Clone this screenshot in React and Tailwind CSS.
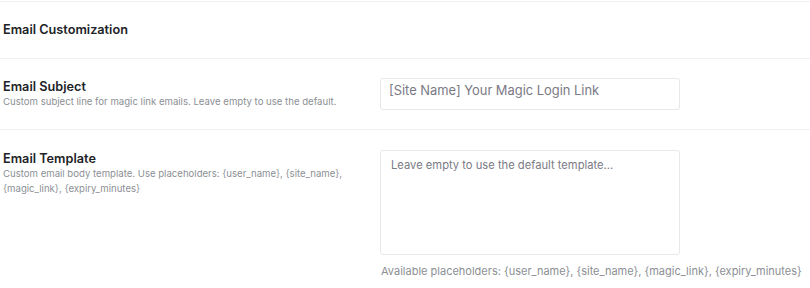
export default function App() {
  return (
    <div className="w-[810px] h-[288px] bg-white overflow-hidden" style={{ fontFamily: "Inter, 'Noto Sans', sans-serif" }}>
      <div className="mt-[1px] border-t border-[#f0f0f0]" />
      <div className="h-[57px] flex items-center pl-[3px] border-b border-[#f0f0f0]">
        <h2 className="text-[12.7px] leading-[16px] font-semibold text-[#1d2327]">Email Customization</h2>
      </div>
      <div className="flex py-[19px] border-b border-[#f0f0f0]">
        <div className="w-[380px] pl-[3px] pt-[1px]">
          <div className="text-[12.7px] leading-[16px] font-semibold text-[#1d2327]">Email Subject</div>
          <div className="text-[9.6px] leading-[15px] text-[#8c8f94] mt-[-1px]">Custom subject line for magic link emails. Leave empty to use the default.</div>
        </div>
        <div className="w-[300px] h-[32px] border border-[#e8e8e8] rounded-[3px] pl-[8px] pt-[3px] text-[12.9px] leading-[18px] text-[#7a7a85]">
          [Site Name] Your Magic Login Link
        </div>
      </div>
      <div className="flex pt-[20px]">
        <div className="w-[380px] pl-[3px] pt-[1px]">
          <div className="text-[12.7px] leading-[16px] font-semibold text-[#1d2327]">Email Template</div>
          <div className="text-[9.6px] leading-[15px] text-[#8c8f94] mt-[-1px] w-[350px]">Custom email body template. Use placeholders: {"{user_name}"}, {"{site_name}"}, {"{magic_link}"}, {"{expiry_minutes}"}</div>
        </div>
        <div className="flex flex-col">
          <div className="w-[300px] h-[105px] border border-[#e8e8e8] rounded-[3px] pl-[10px] pt-[6px] text-[11.2px] leading-[16px] text-[#7a7a85]">
            Leave empty to use the default template...
          </div>
          <div className="mt-[8px] pl-[1px] text-[11px] leading-[16px] text-[#8c8f94] whitespace-nowrap">
            Available placeholders: {"{user_name}"}, {"{site_name}"}, {"{magic_link}"}, {"{expiry_minutes}"}
          </div>
        </div>
      </div>
    </div>
  );
}
